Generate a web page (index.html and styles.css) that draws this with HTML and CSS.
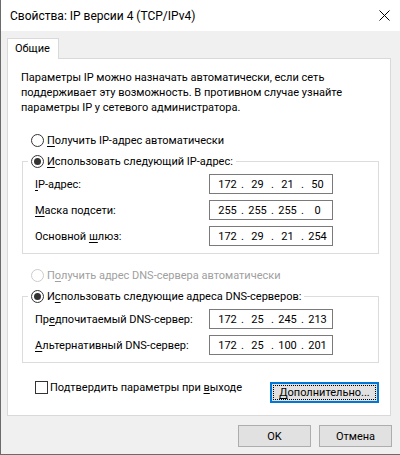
FILE: index.html
```
<!DOCTYPE html>
<html lang="ru">
<head>
  <meta charset="UTF-8">
  <title>Свойства: IP версии 4 (TCP/IPv4)</title>
  <link rel="stylesheet" href="styles.css">
</head>
<body>
  <div class="window">
    <div class="titlebar">
      <span class="title">Свойства: IP версии 4 (TCP/IPv4)</span>
      <span class="close">
        <svg width="11" height="11" viewBox="0 0 11 11"><path d="M0.5 0.5L10.5 10.5M10.5 0.5L0.5 10.5" stroke="#000" stroke-width="1"/></svg>
      </span>
    </div>

    <div class="content">
      <div class="tabs">
        <div class="tab">Общие</div>
      </div>

      <div class="panel">
        <p class="intro">Параметры IP можно назначать автоматически, если сеть<br>поддерживает эту возможность. В противном случае узнайте<br>параметры IP у сетевого администратора.</p>

        <label class="option first">
          <span class="radio"></span>
          <span><u>П</u>олучить IP-адрес автоматически</span>
        </label>

        <fieldset class="group">
          <legend>
            <label class="option">
              <span class="radio checked"></span>
              <span><u>И</u>спользовать следующий IP-адрес:</span>
            </label>
          </legend>
          <div class="row">
            <span><u>I</u>P-адрес:</span>
            <span class="ip"><span>172</span><i>.</i><span>29</span><i>.</i><span>21</span><i>.</i><span>50</span></span>
          </div>
          <div class="row">
            <span><u>М</u>аска подсети:</span>
            <span class="ip"><span>255</span><i>.</i><span>255</span><i>.</i><span>255</span><i>.</i><span>0</span></span>
          </div>
          <div class="row">
            <span>Основной <u>ш</u>люз:</span>
            <span class="ip"><span>172</span><i>.</i><span>29</span><i>.</i><span>21</span><i>.</i><span>254</span></span>
          </div>
        </fieldset>

        <label class="option disabled">
          <span class="radio"></span>
          <span>П<u>о</u>лучить адрес DNS-сервера автоматически</span>
        </label>

        <fieldset class="group">
          <legend>
            <label class="option">
              <span class="radio checked"></span>
              <span>И<u>с</u>пользовать следующие адреса DNS-серверов:</span>
            </label>
          </legend>
          <div class="row">
            <span>Пр<u>е</u>дпочитаемый DNS-сервер:</span>
            <span class="ip"><span>172</span><i>.</i><span>25</span><i>.</i><span>245</span><i>.</i><span>213</span></span>
          </div>
          <div class="row">
            <span><u>А</u>льтернативный DNS-сервер:</span>
            <span class="ip"><span>172</span><i>.</i><span>25</span><i>.</i><span>100</span><i>.</i><span>201</span></span>
          </div>
        </fieldset>

        <div class="footer">
          <label class="option">
            <span class="check"></span>
            <span>Подтвердить параметры при <u>в</u>ыходе</span>
          </label>
          <button class="btn focused"><u>Д</u>ополнительно...</button>
        </div>
      </div>

      <div class="actions">
        <button class="btn">OK</button>
        <button class="btn">Отмена</button>
      </div>
    </div>
  </div>
</body>
</html>
```
FILE: styles.css
```
* {
  box-sizing: border-box;
}
body {
  margin: 0;
  font-family: "Segoe UI", Roboto, sans-serif;
  font-size: 11px;
  color: #000;
  background-color: #f0f0f0;
}
u {
  text-underline-offset: 2px;
}
.window {
  width: 400px;
  height: 455px;
  border-left: 1px solid #6b6b6b;
  border-bottom: 1px solid #6b6b6b;
  background-color: #f0f0f0;
}
.titlebar {
  height: 31px;
  background-color: #fff;
  display: flex;
  align-items: center;
  justify-content: space-between;
}
.title {
  padding-left: 9px;
  font-size: 12px;
}
.close {
  width: 32px;
  height: 31px;
  display: flex;
  align-items: center;
  justify-content: center;
}
.content {
  padding: 7px 8px 0 6px;
}
.tabs {
  display: flex;
}
.tab {
  position: relative;
  width: 52px;
  height: 21px;
  margin-bottom: -1px;
  padding-left: 7px;
  line-height: 20px;
  background-color: #fff;
  border: 1px solid #d9d9d9;
  border-bottom: none;
}
.panel {
  height: 358px;
  margin-right: 1px;
  padding: 11px 11px 0 13px;
  background-color: #fff;
  border: 1px solid #d9d9d9;
}
.intro {
  margin: 0;
  line-height: 15px;
}
.option {
  display: flex;
  align-items: center;
  gap: 3px;
  height: 16px;
  white-space: nowrap;
}
.panel > .option {
  padding-left: 10px;
}
.option.first {
  margin-top: 17px;
}
.option.disabled {
  margin-top: 13px;
  color: #a0a0a0;
}
.radio {
  width: 13px;
  height: 13px;
  border: 1px solid #333;
  border-radius: 50%;
  background-color: #fff;
  display: flex;
  align-items: center;
  justify-content: center;
}
.radio.checked::after {
  content: "";
  width: 7px;
  height: 7px;
  border-radius: 50%;
  background-color: #333;
}
.disabled .radio {
  border-color: #cccccc;
}
.group {
  margin: 5px 0 0 1px;
  padding: 5px 0 7px;
  min-width: 0;
  border: 1px solid #dcdcdc;
}
.group legend {
  margin-left: 5px;
  padding: 0 3px;
}
.row {
  display: grid;
  grid-template-columns: 174px 124px;
  align-items: center;
  height: 20px;
  padding-left: 12px;
}
.row + .row {
  margin-top: 6px;
}
.ip {
  display: flex;
  align-items: center;
  height: 20px;
  padding-left: 5px;
  border: 1px solid #7a7a7a;
}
.ip span {
  width: 25px;
  text-align: center;
}
.ip i {
  width: 5px;
  text-align: center;
  font-style: normal;
}
.footer {
  display: flex;
  justify-content: space-between;
  align-items: flex-start;
  margin: 16px 0 0 0;
  padding-left: 14px;
}
.footer .option {
  gap: 2px;
}
.check {
  width: 13px;
  height: 13px;
  border: 1px solid #333;
  background-color: #fff;
}
.btn {
  font: inherit;
  color: #000;
  background-color: #e1e1e1;
  border: 1px solid #adadad;
  padding: 0;
}
.btn.focused {
  width: 109px;
  height: 21px;
  margin-top: 3px;
  border: 2px solid #0078d7;
  outline: 1px dotted #000;
  outline-offset: -4px;
}
.actions {
  display: flex;
  justify-content: flex-end;
  gap: 8px;
  margin-top: 9px;
}
.actions .btn {
  width: 73px;
  height: 22px;
}
```
